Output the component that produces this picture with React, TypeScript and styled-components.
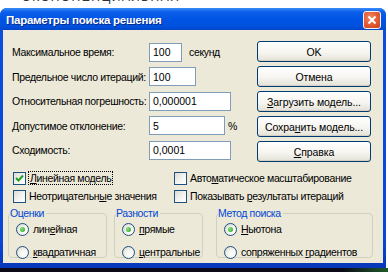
import React from 'react'
import styled, { createGlobalStyle } from 'styled-components'

const GlobalStyle = createGlobalStyle`
  html, body {
    margin: 0;
    padding: 0;
    background: #ffffff;
    font-family: Tahoma, "Liberation Sans", sans-serif;
  }
  #root {
    width: 388px;
    height: 272px;
    overflow: hidden;
  }
`

const Screen = styled.div`
  width: 388px;
  height: 272px;
  display: flex;
  flex-direction: column;
  background: #ffffff;
`

const SheetStrip = styled.div`
  height: 8px;
  flex-shrink: 0;
  background: #ffffff;
  overflow: hidden;
  display: flex;
  padding-left: 22px;

  span {
    font-family: "Liberation Sans", sans-serif;
    font-size: 12px;
    line-height: 12px;
    margin-top: -9px;
    color: #333;
    letter-spacing: 1.5px;
  }
`

const Window = styled.div`
  width: 386px;
  height: 260px;
  flex-shrink: 0;
  display: flex;
  flex-direction: column;
  background: linear-gradient(to bottom, #0a4fe0 0%, #0845d8 90%, #0638b8 100%);
  border-radius: 7px 7px 0 0;
  overflow: hidden;
`

const Taskbar = styled.div`
  flex: 1;
  background: linear-gradient(to right, #0a0a18 0%, #0a0a18 88%, #1f5a2a 100%);
`

const TitleBar = styled.div`
  height: 22px;
  flex-shrink: 0;
  display: flex;
  align-items: center;
  justify-content: space-between;
  padding: 0 5px 0 6px;
  background: linear-gradient(
    to bottom,
    #3c8cf8 0%,
    #0a5eea 18%,
    #0055e5 50%,
    #0050dc 85%,
    #0045c8 100%
  );
`

const Title = styled.div`
  color: #ffffff;
  font-family: "Liberation Sans", sans-serif;
  font-weight: bold;
  font-size: 11.5px;
  letter-spacing: -0.25px;
  margin-top: 2px;
  text-shadow: 1px 1px 0 #0a2a8a;
`

const CloseButton = styled.div`
  width: 16px;
  height: 16px;
  margin-top: 2px;
  border: 1px solid #f4f4f4;
  border-radius: 3px;
  background: radial-gradient(circle at 40% 35%, #f08a68 0%, #e2582f 55%, #c4401f 100%);
  display: flex;
  align-items: center;
  justify-content: center;
`

const Body = styled.div`
  flex: 1;
  margin: 0 3px 5px 3px;
  background: #ece9d8;
  padding: 10px 0 0 9px;
  display: flex;
  flex-direction: column;
  font-family: "Liberation Sans", sans-serif;
  font-size: 10.5px;
  letter-spacing: -0.35px;
  color: #000;
`

const TopArea = styled.div`
  display: flex;
`

const Fields = styled.div`
  width: 245px;
  display: flex;
  flex-direction: column;
`

const FieldRow = styled.div`
  height: 24.5px;
  display: flex;
  align-items: center;
`

const FieldLabel = styled.div`
  width: 137px;
  white-space: nowrap;
`

const Input = styled.div<{ $w: number }>`
  width: ${(p) => p.$w}px;
  height: 19px;
  box-sizing: border-box;
  border: 1px solid #7f9db9;
  background: #fff;
  padding-left: 3px;
  display: flex;
  align-items: center;
  letter-spacing: 0;
`

const Unit = styled.span<{ $gap: number }>`
  margin-left: ${(p) => p.$gap}px;
`

const Buttons = styled.div`
  display: flex;
  flex-direction: column;
  gap: 4px;
  padding-top: 1px;
`

const Button = styled.div`
  width: 114px;
  height: 21px;
  box-sizing: border-box;
  border: 1px solid #003c74;
  border-radius: 3px;
  background: linear-gradient(to bottom, #ffffff 0%, #f6f5f0 55%, #e3e1d6 100%);
  box-shadow: inset 0 -1px 0 #d6d0c0;
  display: flex;
  align-items: center;
  justify-content: center;
  letter-spacing: -0.1px;
`

const U = styled.span`
  text-decoration: underline;
`

const ChecksGrid = styled.div`
  display: grid;
  grid-template-columns: 161px 1fr;
  row-gap: 5px;
  margin-top: 9px;
  padding-left: 1px;
`

const CheckItem = styled.div`
  display: flex;
  align-items: center;
  gap: 3px;
  height: 13px;
  white-space: nowrap;
`

const CheckBox = styled.div`
  width: 13px;
  height: 13px;
  box-sizing: border-box;
  border: 1px solid #1c5180;
  background: linear-gradient(135deg, #dcdcd7 0%, #f5f5f1 60%, #ffffff 100%);
  display: flex;
  align-items: center;
  justify-content: center;
`

const FocusText = styled.span`
  outline: 1px dotted #000;
  padding: 0 1px;
`

const Groups = styled.div`
  display: flex;
  margin: 10px 0 0 -4px;
`

const Group = styled.div<{ $w: number; $ml?: number }>`
  width: ${(p) => p.$w}px;
  margin-left: ${(p) => p.$ml || 0}px;
  box-sizing: border-box;
  border: 1px solid #d0d0bf;
  border-radius: 4px;
  height: 45px;
  display: flex;
  flex-direction: column;
  padding: 0 0 0 7px;
`

const Legend = styled.div`
  color: #0046d5;
  background: #ece9d8;
  margin: -7px 0 0 -6px;
  padding: 0 2px 0 0;
  align-self: flex-start;
  line-height: 12px;
`

const RadioRow = styled.div`
  display: flex;
  align-items: center;
  gap: 4px;
  height: 13px;
  margin-top: 4px;
  white-space: nowrap;

  & + & {
    margin-top: 10px;
  }
`

const RadioCircle = styled.div<{ $on?: boolean }>`
  width: 13px;
  height: 13px;
  box-sizing: border-box;
  border-radius: 50%;
  border: 1px solid #1c5180;
  background: radial-gradient(circle at 65% 65%, #ffffff 0%, #f4f4f0 40%, #d4d4cc 100%);
  display: flex;
  align-items: center;
  justify-content: center;

  &::after {
    content: '';
    width: 5px;
    height: 5px;
    border-radius: 50%;
    background: ${(p) => (p.$on ? 'radial-gradient(circle at 35% 35%, #8ce07a, #21a121)' : 'transparent')};
  }
`

function Check() {
  return (
    <svg width="9" height="8" viewBox="0 0 9 8">
      <path d="M1 4 L3.5 6.5 L8 1.5" fill="none" stroke="#21a121" strokeWidth="2" />
    </svg>
  )
}

function Radio({ on, children }: { on?: boolean; children: React.ReactNode }) {
  return (
    <RadioRow>
      <RadioCircle $on={on} />
      <span>{children}</span>
    </RadioRow>
  )
}

const fields = [
  { label: 'Максимальное время:', value: '100', w: 33, unit: 'секунд', gap: 7 },
  { label: 'Предельное число итераций:', value: '100', w: 47 },
  { label: 'Относительная погрешность:', value: '0,000001', w: 82 },
  { label: 'Допустимое отклонение:', value: '5', w: 76, unit: '%', gap: 3 },
  { label: 'Сходимость:', value: '0,0001', w: 82 },
]

export default function App() {
  return (
    <Screen>
      <GlobalStyle />
      <SheetStrip>
        <span>ЭКСПОНЕНЦИАЛЬНАЯ</span>
      </SheetStrip>
      <Window>
        <TitleBar>
          <Title>Параметры поиска решения</Title>
          <CloseButton>
            <svg width="10" height="10" viewBox="0 0 10 10">
              <path d="M1.5 1.5 L8.5 8.5 M8.5 1.5 L1.5 8.5" stroke="#fff" strokeWidth="2" />
            </svg>
          </CloseButton>
        </TitleBar>
        <Body>
          <TopArea>
            <Fields>
              {fields.map((f) => (
                <FieldRow key={f.label}>
                  <FieldLabel>{f.label}</FieldLabel>
                  <Input $w={f.w}>{f.value}</Input>
                  {f.unit && <Unit $gap={f.gap || 0}>{f.unit}</Unit>}
                </FieldRow>
              ))}
            </Fields>
            <Buttons>
              <Button>OK</Button>
              <Button>Отмена</Button>
              <Button>
                <U>З</U>агрузить модель...
              </Button>
              <Button>
                Сохра<U>н</U>ить модель...
              </Button>
              <Button>
                <U>С</U>правка
              </Button>
            </Buttons>
          </TopArea>
          <ChecksGrid>
            <CheckItem>
              <CheckBox>
                <Check />
              </CheckBox>
              <FocusText>
                <U>Л</U>инейная модель
              </FocusText>
            </CheckItem>
            <CheckItem>
              <CheckBox />
              <span>
                Авто<U>м</U>атическое масштабирование
              </span>
            </CheckItem>
            <CheckItem>
              <CheckBox />
              <span>
                Неотрицательн<U>ы</U>е значения
              </span>
            </CheckItem>
            <CheckItem>
              <CheckBox />
              <span>
                Показывать <U>р</U>езультаты итераций
              </span>
            </CheckItem>
          </ChecksGrid>
          <Groups>
            <Group $w={99}>
              <Legend>Оценки</Legend>
              <Radio on>
                лин<U>е</U>йная
              </Radio>
              <Radio>
                <U>к</U>вадратичная
              </Radio>
            </Group>
            <Group $w={89} $ml={7}>
              <Legend>Разности</Legend>
              <Radio on>
                <U>п</U>рямые
              </Radio>
              <Radio>
                <U>ц</U>ентральные
              </Radio>
            </Group>
            <Group $w={157} $ml={13}>
              <Legend>Метод поиска</Legend>
              <Radio on>
                <U>Н</U>ьютона
              </Radio>
              <Radio>
                сопряженных <U>г</U>радиентов
              </Radio>
            </Group>
          </Groups>
        </Body>
      </Window>
      <Taskbar />
    </Screen>
  )
}
